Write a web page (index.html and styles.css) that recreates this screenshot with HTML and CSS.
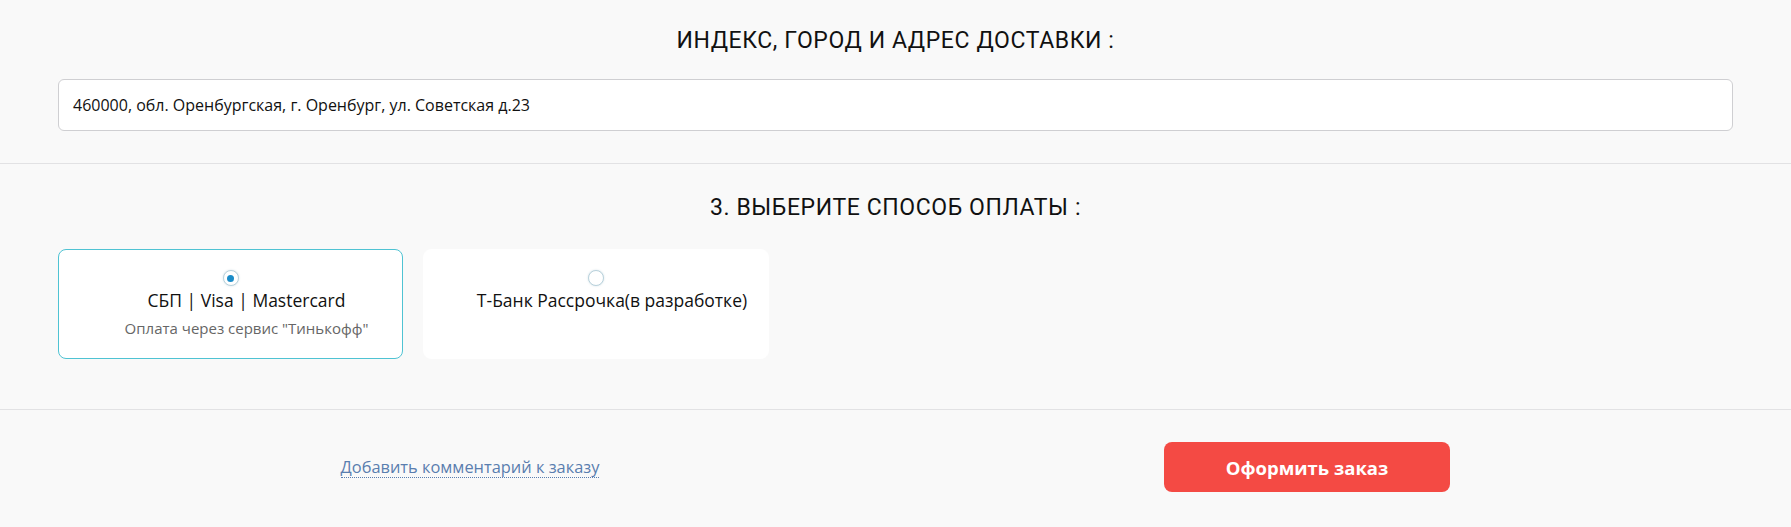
FILE: index.html
```html
<!DOCTYPE html>
<html lang="ru">
<head>
<meta charset="utf-8">
<title>Оформление заказа</title>
<link rel="stylesheet" href="styles.css">
</head>
<body>
<section class="section section-address">
  <h2 class="section-title">ИНДЕКС, ГОРОД И АДРЕС ДОСТАВКИ :</h2>
  <div class="address-field">460000, обл. Оренбургская, г. Оренбург, ул. Советская д.23</div>
</section>
<section class="section section-payment">
  <h2 class="section-title">3. ВЫБЕРИТЕ СПОСОБ ОПЛАТЫ :</h2>
  <div class="pay-list">
    <div class="pay-card pay-card-active">
      <span class="radio radio-checked"></span>
      <div class="pay-text">
        <div class="pay-title">СБП | Visa | Mastercard</div>
        <div class="pay-desc">Оплата через сервис "Тинькофф"</div>
      </div>
    </div>
    <div class="pay-card">
      <span class="radio"></span>
      <div class="pay-text">
        <div class="pay-title">Т-Банк Рассрочка(в разработке)</div>
      </div>
    </div>
  </div>
</section>
<section class="section-submit">
  <div class="submit-col"><a class="comment-link" href="#">Добавить комментарий к заказу</a></div>
  <div class="submit-col"><button class="submit-btn" type="button">Оформить заказ</button></div>
</section>
</body>
</html>
```
FILE: styles.css
```css
html, body {
  margin: 0;
  padding: 0;
  background: #f9f9f9;
}
body {
  font-family: "Open Sans", "Noto Sans", sans-serif;
  color: #111;
}
.section {
  padding: 26px 58px 32px 58px;
  border-bottom: 1px solid #e2e2e4;
}
.section-address .address-field {
  margin-top: 23px;
}
.section-payment {
  padding-top: 29px;
  padding-bottom: 50px;
}
.section-title {
  margin: 0;
  height: 30px;
  line-height: 30px;
  text-align: center;
  font-family: "Roboto", sans-serif;
  font-weight: normal;
  font-size: 23px;
  letter-spacing: 0.6px;
  color: #111;
}
.address-field {
  box-sizing: border-box;
  height: 52px;
  border: 1px solid #cfcfd2;
  border-radius: 6px;
  background: #fff;
  padding: 0 14px;
  display: flex;
  align-items: center;
  font-size: 16px;
  color: #111;
}
.pay-list {
  margin-top: 26px;
  display: flex;
  gap: 20px;
}
.pay-card {
  box-sizing: border-box;
  width: 346px;
  height: 110px;
  border: 1px solid #fff;
  border-radius: 8px;
  background: #fff;
  padding-top: 20px;
  display: flex;
  flex-direction: column;
  align-items: center;
}
.pay-card-active {
  width: 345px;
  border-color: #4fc3d3;
}
.radio {
  box-sizing: border-box;
  width: 16px;
  height: 16px;
  border-radius: 50%;
  border: 1px solid #b9d2dc;
  background: #fff;
  box-shadow: 0 0 2px rgba(120, 160, 180, 0.35);
  display: flex;
  align-items: center;
  justify-content: center;
}
.radio-checked::after {
  content: "";
  width: 7px;
  height: 7px;
  border-radius: 50%;
  background: #1a8cc8;
}
.pay-text {
  padding-left: 32px;
  text-align: center;
  margin-top: 2px;
}
.pay-title {
  font-size: 17.5px;
  line-height: 24px;
  color: #111;
}
.pay-desc {
  margin-top: 6px;
  font-size: 15px;
  line-height: 20px;
  color: #666;
}
.section-submit {
  padding: 32px 72px 36px 58px;
  display: grid;
  grid-template-columns: 1fr 1fr;
  column-gap: 13px;
  align-items: center;
}
.submit-col {
  display: flex;
  justify-content: center;
}
.comment-link {
  font-size: 16.4px;
  color: #5a7eaf;
  text-decoration: none;
  border-bottom: 1px dotted #5a7eaf;
  line-height: 20px;
}
.submit-btn {
  width: 286px;
  height: 50px;
  border: none;
  border-radius: 8px;
  background: #f44a44;
  color: #fff;
  font-family: "Open Sans", "Noto Sans", sans-serif;
  font-weight: bold;
  font-size: 18.5px;
  cursor: pointer;
}
```
